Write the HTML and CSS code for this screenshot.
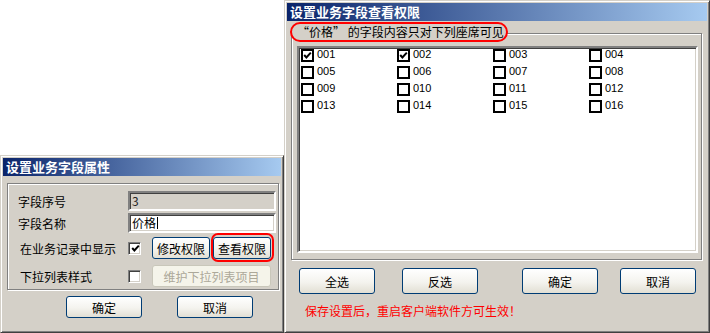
FILE: index.html
```html
<!DOCTYPE html>
<html lang="zh-CN">
<head>
<meta charset="utf-8">
<title>设置业务字段</title>
<link rel="stylesheet" href="styles.css">
</head>
<body>
<div class="screen">
  <div class="left-col">
    <div class="left-gap"></div>
    <div class="window win-small">
      <div class="titlebar">设置业务字段属性</div>
      <div class="group group-small">
        <div class="frow">
          <span class="flabel">字段序号</span>
          <span class="input disabled">3</span>
        </div>
        <div class="frow r2">
          <span class="flabel">字段名称</span>
          <span class="input">价格<span class="caret"></span></span>
        </div>
        <div class="frow r3">
          <span class="flabel ind">在业务记录中显示</span>
          <span class="cb3d"><svg width="9" height="9" viewBox="0 0 9 9"><polyline points="1.2,4 3.4,6.4 7.8,1.6" fill="none" stroke="#000" stroke-width="2"/></svg></span>
          <button class="btn btn-sm b-edit">修改权限</button>
          <span class="redmark-btn"><button class="btn btn-sm">查看权限</button></span>
        </div>
        <div class="frow r4">
          <span class="flabel ind">下拉列表样式</span>
          <span class="cb3d"></span>
          <button class="btn btn-sm btn-disabled b-wide">维护下拉列表项目</button>
        </div>
      </div>
      <div class="small-actions">
        <button class="btn btn-sm b-ok">确定</button>
        <button class="btn btn-sm b-cancel">取消</button>
      </div>
    </div>
  </div>

  <div class="window win-big">
    <div class="titlebar">设置业务字段查看权限</div>
    <div class="group group-big">
      <div class="legend">“价格” 的字段内容只对下列座席可见</div>
      <div class="listbox">
        <div class="list-grid">
          <div class="item"><span class="cbflat"><svg width="9" height="9" viewBox="0 0 9 9"><polyline points="1.2,4 3.4,6.4 7.8,1.6" fill="none" stroke="#000" stroke-width="2"/></svg></span><span class="itxt">001</span></div>
          <div class="item"><span class="cbflat"><svg width="9" height="9" viewBox="0 0 9 9"><polyline points="1.2,4 3.4,6.4 7.8,1.6" fill="none" stroke="#000" stroke-width="2"/></svg></span><span class="itxt">002</span></div>
          <div class="item"><span class="cbflat"></span><span class="itxt">003</span></div>
          <div class="item"><span class="cbflat"></span><span class="itxt">004</span></div>
          <div class="item"><span class="cbflat"></span><span class="itxt">005</span></div>
          <div class="item"><span class="cbflat"></span><span class="itxt">006</span></div>
          <div class="item"><span class="cbflat"></span><span class="itxt">007</span></div>
          <div class="item"><span class="cbflat"></span><span class="itxt">008</span></div>
          <div class="item"><span class="cbflat"></span><span class="itxt">009</span></div>
          <div class="item"><span class="cbflat"></span><span class="itxt">010</span></div>
          <div class="item"><span class="cbflat"></span><span class="itxt">011</span></div>
          <div class="item"><span class="cbflat"></span><span class="itxt">012</span></div>
          <div class="item"><span class="cbflat"></span><span class="itxt">013</span></div>
          <div class="item"><span class="cbflat"></span><span class="itxt">014</span></div>
          <div class="item"><span class="cbflat"></span><span class="itxt">015</span></div>
          <div class="item"><span class="cbflat"></span><span class="itxt">016</span></div>
        </div>
      </div>
    </div>
    <div class="big-actions">
      <button class="btn btn-lg a1">全选</button>
      <button class="btn btn-lg a2">反选</button>
      <button class="btn btn-lg a3">确定</button>
      <button class="btn btn-lg a4">取消</button>
    </div>
    <div class="note">保存设置后，重启客户端软件方可生效！</div>
  </div>
</div>
</body>
</html>
```

FILE: styles.css
```css
* { box-sizing: border-box; }
html, body { margin: 0; padding: 0; }
body {
  background: #fff;
  font-family: "Noto Sans CJK SC", "Liberation Sans", sans-serif;
  font-size: 12px;
  color: #000;
}
.screen { display: flex; width: 710px; height: 333px; overflow: hidden; }
.left-col { width: 284px; display: flex; flex-direction: column; flex: none; }
.left-gap { height: 155px; flex: none; }

.window {
  background: #d4d0c8;
  border: 1px solid;
  border-color: #d4d0c8 #404040 #404040 #d4d0c8;
  box-shadow: inset 1px 1px 0 #fff, inset -1px -1px 0 #808080;
  padding: 2px;
  display: flex;
  flex-direction: column;
  flex: none;
}
.win-small { width: 284px; height: 178px; }
.win-big { width: 426px; height: 333px; }

.titlebar {
  height: 18px;
  flex: none;
  background: linear-gradient(to right, #0a246a, #a6caf0);
  color: #fff;
  font-weight: bold;
  font-size: 13px;
  line-height: 18px;
  padding-left: 3px;
  white-space: nowrap;
  overflow: hidden;
}

.group {
  border: 1px solid #808080;
  box-shadow: inset 1px 1px 0 #fff, 1px 1px 0 #fff;
  flex: none;
}
.group-small {
  margin: 7px 0 0 4px;
  width: 272px;
  height: 107px;
  padding: 7px 0 0 10px;
}
.frow { display: flex; align-items: center; height: 20px; }
.frow.r2 { margin-top: 2px; }
.frow.r3 { margin-top: 4px; height: 22px; }
.frow.r4 { margin-top: 6px; height: 22px; }
.flabel { width: 110px; flex: none; white-space: nowrap; }
.flabel.ind { padding-left: 2px; }

.input {
  width: 148px;
  height: 20px;
  flex: none;
  background: #fff;
  border: 2px solid;
  border-color: #808080 #fff #fff #808080;
  box-shadow: inset 1px 1px 0 #404040, inset -1px -1px 0 #d4d0c8;
  padding-left: 2px;
  line-height: 16px;
  display: flex;
  align-items: center;
}
.input.disabled { background: #d4d0c8; color: #222; }
.caret { display: inline-block; width: 1px; height: 12px; background: #000; margin-left: 1px; }

.cb3d {
  width: 13px;
  height: 13px;
  flex: none;
  background: #fff;
  border: 1px solid;
  border-color: #808080 #fff #fff #808080;
  box-shadow: inset 1px 1px 0 #404040, inset -1px -1px 0 #d4d0c8;
  display: flex;
  align-items: center;
  justify-content: center;
}
.cb3d svg { display: block; margin: 1px 0 0 1px; }

.btn {
  font-family: inherit;
  font-size: 12px;
  color: #000;
  padding: 0;
  margin: 0;
  border: 1px solid #003c74;
  border-radius: 3px;
  background: linear-gradient(#ffffff, #f4f3ee 55%, #e2dfd4);
  display: flex;
  align-items: center;
  justify-content: center;
  flex: none;
  white-space: nowrap;
}
.btn-sm { height: 22px; width: 58px; }
.b-edit { margin-left: 11px; }
.btn-disabled {
  border-color: #c9c7ba;
  color: #aca899;
  background: #f5f4ea;
}
.b-wide { width: 119px; margin-left: 11px; }
.redmark-btn {
  display: flex;
  flex: none;
  margin: -4px 0 -3px 1px;
  border: 2px solid #ff0000;
  border-radius: 7px;
  padding: 2px 1px 1px 0;
}

.small-actions { display: flex; margin-top: 6px; }
.small-actions .btn { width: 76px; }
.b-ok { margin-left: 63px; }
.b-cancel { margin-left: 35px; }

.group-big {
  margin: 12px 0 0 4px;
  width: 411px;
  height: 227px;
}
.legend {
  margin: -12px 0 0 -2px;
  width: 218px;
  height: 20px;
  border: 2px solid #ff0000;
  border-radius: 10px;
  background: #d4d0c8;
  padding-left: 5px;
  line-height: 16px;
  white-space: nowrap;
}
.listbox {
  margin: 4px 0 0 5px;
  width: 401px;
  height: 207px;
  background: #fff;
  border: 2px solid;
  border-color: #808080 #fff #fff #808080;
  box-shadow: inset 1px 1px 0 #404040, inset -1px -1px 0 #d4d0c8;
}
.list-grid {
  display: grid;
  grid-template-columns: repeat(4, 96px);
  grid-auto-rows: 17px;
  padding: 1px 0 0 2px;
}
.item { display: flex; align-items: flex-start; }
.cbflat {
  width: 13px;
  height: 13px;
  flex: none;
  border: 2px solid #000;
  background: #fff;
  display: flex;
  align-items: center;
  justify-content: center;
}
.cbflat svg { display: block; }
.itxt {
  margin-left: 3px;
  font-family: "Liberation Sans", sans-serif;
  font-size: 11px;
  line-height: 11px;
}

.big-actions { display: flex; margin-top: 8px; }
.btn-lg { height: 26px; width: 76px; }
.a1 { margin-left: 12px; }
.a2 { margin-left: 27px; }
.a3 { margin-left: 44px; }
.a4 { margin-left: 22px; }
.note {
  margin: 10px 0 0 18px;
  color: #ff0000;
  line-height: 14px;
  white-space: nowrap;
}
```
